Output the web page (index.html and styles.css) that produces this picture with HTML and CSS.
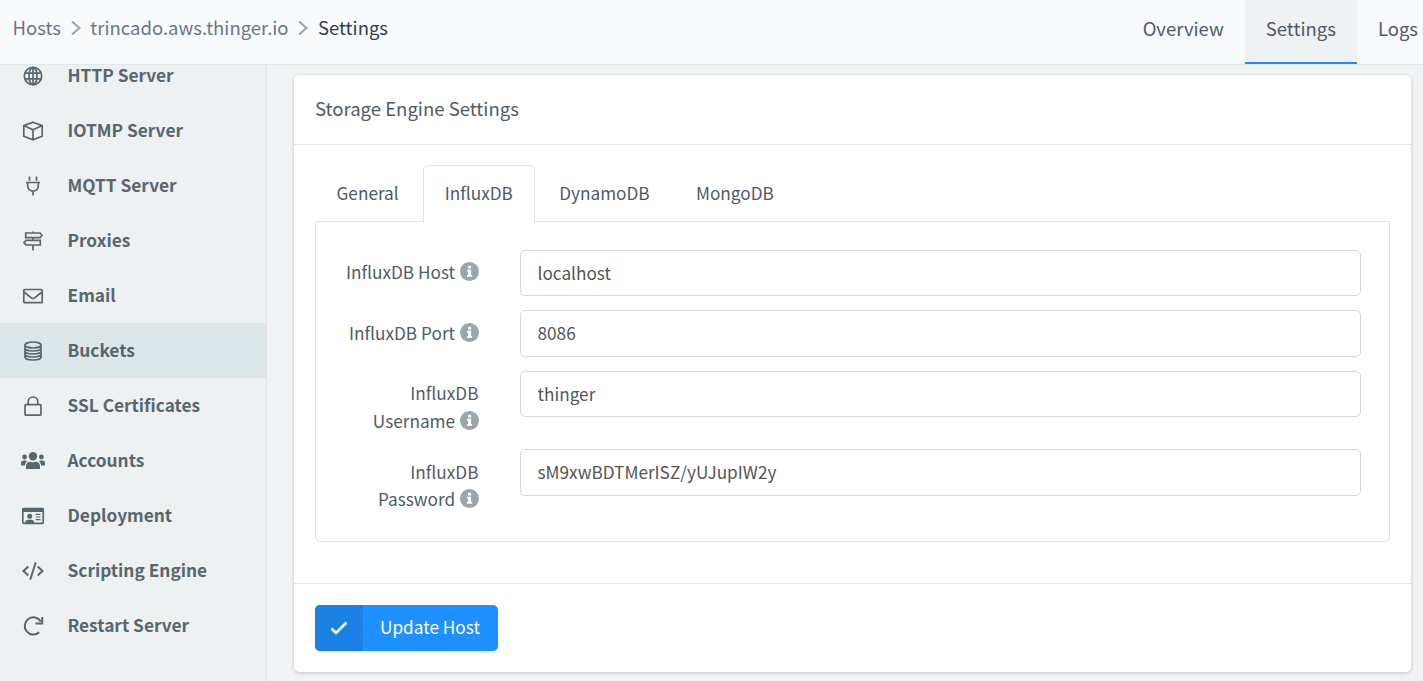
FILE: index.html
```html
<!DOCTYPE html>
<html lang="en">
<head>
<meta charset="utf-8">
<title>Host Settings</title>
<link rel="stylesheet" href="styles.css">
</head>
<body>
<svg class="sprite" aria-hidden="true">
  <symbol id="info" viewBox="0 0 18 18"><circle cx="9" cy="9" r="9" fill="#98a6ad"/><path fill="#fff" d="M7.6 3.6h2.9v2.6H7.6zM6.6 7.3h3.9v5h1v1.6H6.6v-1.6h1V8.9h-1z"/></symbol>
</svg>
<header class="topbar">
  <nav class="crumbs">
    <a>Hosts</a>
    <svg class="sep" viewBox="0 0 10 16"><path d="M1 1.500 8.500 8 1 14.500"/></svg>
    <a class="crumb-host">trincado.aws.thinger.io</a>
    <svg class="sep" viewBox="0 0 10 16"><path d="M1 1.500 8.500 8 1 14.500"/></svg>
    <span class="current">Settings</span>
  </nav>
  <nav class="topnav">
    <a>Overview</a><a class="active">Settings</a><a>Logs</a>
  </nav>
</header>
<div class="shell">
  <aside class="sidebar">
    <ul class="menu">
      <li><svg viewBox="0 0 24 24"><circle cx="12" cy="12" r="8.7"/><ellipse cx="12" cy="12" rx="4" ry="8.7"/><path d="M12 3.3v17.4M4.2 9.2h15.6M4.2 14.8h15.6"/></svg><span>HTTP Server</span></li>
      <li><svg viewBox="0 0 24 24"><path d="m12 3.2 9.2 3.4v10.6L12 20.8l-9.2-3.6V6.6zM2.8 6.6 12 10.8l9.2-4.2M12 10.8v10"/></svg><span>IOTMP Server</span></li>
      <li><svg viewBox="0 0 24 24"><path d="M8.500 2.500v4.300M15.500 2.500v4.300M5 8.500h14M6.700 8.500v3.300a5.300 5.300 0 0 0 10.600 0V8.500M12 17.200v4.300"/></svg><span>MQTT Server</span></li>
      <li><svg viewBox="0 0 24 24"><path d="M12 2.500v1.500M12 8.600v2.600M12 16v5.500M4.700 4h14.300l2 2.300-2 2.300H4.700zM19.300 11.300H5l-2 2.350 2 2.350h14.300z"/></svg><span>Proxies</span></li>
      <li><svg viewBox="0 0 24 24"><rect x="2.800" y="5.500" width="18.400" height="13.200" rx="1"/><path d="m3 8 7 5.700c1.200 1 2.800 1 4 0L21 8"/></svg><span>Email</span></li>
      <li class="selected"><svg viewBox="0 0 24 24"><ellipse cx="12" cy="6" rx="8" ry="3"/><path d="M4 6v12c0 4 16 4 16 0V6M4 9c0 4 16 4 16 0M4 12c0 4 16 4 16 0M4 15c0 4 16 4 16 0"/></svg><span>Buckets</span></li>
      <li><svg viewBox="0 0 24 24"><rect x="4" y="10.700" width="16" height="10.500" rx="1"/><path d="M7.200 10.700V7.800a4.800 4.800 0 0 1 9.600 0v2.900"/></svg><span>SSL Certificates</span></li>
      <li><svg class="solid" viewBox="0 0 24 24"><circle cx="12" cy="7.300" r="4.200"/><circle cx="3.600" cy="8" r="2.400"/><circle cx="20.400" cy="8" r="2.400"/><path d="M5 20v-3a4.500 4.500 0 0 1 4.500-4.300q2.500 1.200 5 0A4.500 4.500 0 0 1 19 17v3zM0 16.500V14a2.600 2.600 0 0 1 2.600-2.400h2.200l1.100.6a6 6 0 0 0-2 4.300zM24 16.500V14a2.600 2.600 0 0 0-2.600-2.400h-2.200l-1.100.6a6 6 0 0 1 2 4.300z"/></svg><span>Accounts</span></li>
      <li><svg viewBox="0 0 24 24"><rect x="1.800" y="4.700" width="20.400" height="14.600" rx="1"/><path class="fill" d="M1.200 4.200h21.600v3.700H1.200zM4.200 19v-.8a2.600 2.600 0 0 1 2.600-2.500h3.800a2.600 2.600 0 0 1 2.600 2.500v.8z"/><circle class="fill" cx="8.700" cy="12.300" r="2.500"/><path d="M14.700 10.400h4.800M14.700 13h4.800M14.700 15.600h4.800" stroke-width="1.200"/></svg><span>Deployment</span></li>
      <li><svg class="bold" viewBox="0 0 24 24"><path d="M7.300 7.600 2.500 12l4.800 4.400M16.700 7.600 21.500 12l-4.800 4.400M14.800 3.200 9.200 20.800"/></svg><span>Scripting Engine</span></li>
      <li><svg class="bold" viewBox="0 0 24 24"><path d="M19.700 7.500A8.600 8.600 0 1 0 18.200 18.300M21.200 3v6.500h-6.700"/></svg><span>Restart Server</span></li>
    </ul>
  </aside>
  <main class="content">
    <section class="card">
      <h1 class="card-title">Storage Engine Settings</h1>
      <div class="card-body">
        <div class="tabs">
          <a>General</a><a class="active">InfluxDB</a><a>DynamoDB</a><a>MongoDB</a>
        </div>
        <form class="panel">
          <label class="row"><span class="label">InfluxDB Host <svg class="info"><use href="#info"/></svg></span><input type="text" value="localhost"></label>
          <label class="row"><span class="label">InfluxDB Port <svg class="info"><use href="#info"/></svg></span><input type="text" value="8086"></label>
          <label class="row"><span class="label">InfluxDB<br>Username <svg class="info"><use href="#info"/></svg></span><input type="text" value="thinger"></label>
          <label class="row"><span class="label">InfluxDB<br>Password <svg class="info"><use href="#info"/></svg></span><input type="text" value="sM9xwBDTMerISZ/yUJupIW2y"></label>
        </form>
      </div>
      <footer class="card-footer">
        <button class="btn" type="button"><span class="btn-icon"><svg viewBox="0 0 18 14"><path d="m1.500 7.500 4.500 4.500L16.500 1.500"/></svg></span><span class="btn-text">Update Host</span></button>
      </footer>
    </section>
  </main>
</div>
</body>
</html>
```
FILE: styles.css
```css
* { box-sizing: border-box; }
body {
  margin: 0;
  height: 681px;
  overflow: hidden;
  display: flex;
  flex-direction: column;
  background: #f2f3f5;
  color: #515a69;
  font: 17.22px/27.5px "Noto Sans CJK SC", "Noto Sans", sans-serif;
}
.sprite { display: none; }
.topbar {
  flex: 0 0 65px;
  display: flex;
  justify-content: space-between;
  background: #f9fafc;
  border-bottom: 1px solid #e1e6e9;
  font-size: 18.5px;
}
.crumbs { display: flex; align-items: center; height: 56px; padding-left: 12.5px; color: #6d7685; }
.sep { width: 10px; height: 16px; margin: 0 9.7px; fill: none; stroke: #98a1af; stroke-width: 2; }
.current { color: #343e4d; }
.topnav { display: flex; }
.topnav a { height: 64px; padding: 15px 21px 0; }
.topnav a:last-child { padding-right: 5px; }
.topnav .active { background: #f0f1f3; border-bottom: 2px solid #1e8fff; }
.shell { flex: 1; min-height: 0; display: flex; }
.sidebar { flex: 0 0 267px; overflow: hidden; background: #edf1f2; border-right: 1px solid #dee5e7; }
.menu { list-style: none; margin: -17px 0 0; padding: 0; font-size: 17.3px; line-height: 19px; font-weight: 700; color: #58666e; }
.menu li { display: flex; align-items: center; height: 55px; padding-left: 21px; gap: 22.5px; }
.menu .selected { background: #dde6e9; }
.menu span { margin-top: -2px; }
.menu svg { width: 24px; height: 24px; flex: none; fill: none; stroke: #58666e; stroke-width: 1.7; }
.menu .bold { stroke-width: 2; }
.menu .solid, .menu .fill { fill: #58666e; stroke: none; }
.content { flex: 1; padding: 10px 12px 9px 27px; }
.card {
  height: 597px;
  display: flex;
  flex-direction: column;
  background: #fff;
  border-radius: 5px;
  box-shadow: 0 1px 4px rgba(0, 0, 0, .2);
}
.card-title { margin: 0; height: 70px; padding: 19px 21px 0; border-bottom: 1px solid #e4e7ea; font-size: 18.55px; line-height: 27.5px; font-weight: 400; }
.card-body { flex: 1; padding: 20px 21px 0; }
.tabs { display: flex; height: 57px; margin-bottom: -1px; }
.tabs a { padding: 12.7px 21px 0; border: 1px solid transparent; margin-right: 2.3px; }
.tabs a:first-child { padding-left: 20.5px; margin-right: 2px; }
.tabs .active { background: #fff; border-color: #dee5e7; border-bottom: 0; border-radius: 5px 5px 0 0; }
.panel { height: 321px; padding: 27.7px 28px 0; border: 1px solid #dee5e7; border-radius: 0 0 5px 5px; display: flex; flex-direction: column; gap: 14px; }
.row { display: grid; grid-template-columns: 134.5px 841px; column-gap: 41.5px; align-items: start; }
.label { padding-top: 8.6px; text-align: right; white-space: nowrap; }
.row:nth-child(3) { padding-bottom: .8px; }
.info { width: 19px; height: 19px; vertical-align: -2px; margin-left: .6px; }
input {
  height: 46.5px;
  padding: 0 16.5px 1px;
  border: 1px solid #cfdadd;
  border-radius: 5px;
  background: #fff;
  color: #555;
  font: inherit;
}
.card-footer { height: 89px; padding: 21px; border-top: 1px solid #e4e7ea; }
.btn { display: flex; width: 183px; height: 46px; padding: 0; border: 0; border-radius: 5px; overflow: hidden; background: #1f90ff; color: #fff; font: inherit; box-shadow: 0 1px 1px rgba(90, 90, 90, .15); }
.btn-icon { width: 48px; height: 46px; display: flex; align-items: center; justify-content: center; background: #1c81e5; }
.btn-icon svg { width: 18px; height: 14px; fill: none; stroke: #fff; stroke-width: 2.6; }
.btn-text { flex: 1; padding-top: 8px; padding-right: 1px; }
```
